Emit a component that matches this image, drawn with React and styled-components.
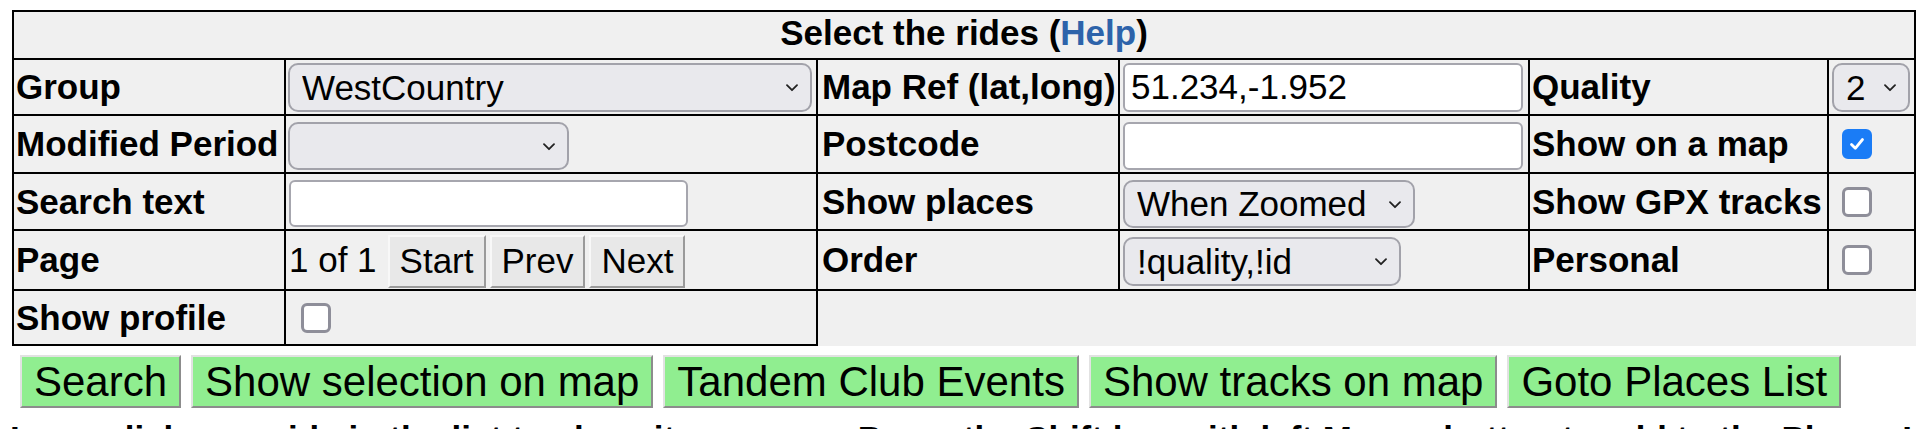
import React from "react";
import styled, { createGlobalStyle } from "styled-components";

const GlobalStyle = createGlobalStyle`
  html, body { margin: 0; padding: 0; background: #fff; }
  body { font-family: "Liberation Sans", Arial, Helvetica, sans-serif; color: #000; }
  * { box-sizing: border-box; }
`;

const Page = styled.div`
  width: 1920px;
  height: 429px;
  overflow: hidden;
  padding: 10px 0 0 12px;
`;

const Form = styled.div`
  display: grid;
  grid-template-columns: 274px 532px 302px 410px 299px 87px;
  grid-template-rows: 50px 56px 58px 57px 60px 55px;
  width: 1904px;
  background: #f0f0f0;
  font-size: 35px;
`;

const Cell = styled.div`
  display: flex;
  align-items: center;
  min-width: 0;
  white-space: nowrap;
  padding: 0 0 0 ${(p) => p.$pad ?? 2}px;
  border-right: 2px solid #000;
  border-bottom: 2px solid #000;
  ${(p) => (p.$first ? "border-left: 2px solid #000;" : "")}
`;

const TitleCell = styled(Cell)`
  grid-column: 1 / -1;
  border-top: 2px solid #000;
  border-left: 2px solid #000;
  justify-content: center;
  font-weight: bold;
  padding: 0 0 4px 0;
`;

const Label = styled(Cell)`
  font-weight: bold;
`;

const HelpLink = styled.a`
  color: #2d63aa;
  text-decoration: none;
`;

const SelectWrap = styled.div`
  position: relative;
  display: inline-flex;
  width: ${(p) => p.$w}px;
  height: ${(p) => p.$h ?? 49}px;
  margin-top: ${(p) => p.$mt ?? 0}px;
`;

const NativeSelect = styled.select`
  appearance: none;
  -webkit-appearance: none;
  width: 100%;
  height: 100%;
  margin: 0;
  padding: 0 40px 0 12px;
  font-family: inherit;
  font-size: 35px;
  font-weight: normal;
  color: #000;
  background: #e9e9ed;
  border: 2px solid #a2a2aa;
  border-radius: 10px;
  outline: none;
`;

const Chevron = styled.svg`
  position: absolute;
  right: 14px;
  top: 50%;
  width: 12px;
  height: 8px;
  margin-top: -3px;
  pointer-events: none;
`;

const TextInput = styled.input`
  width: ${(p) => p.$w}px;
  height: ${(p) => p.$h ?? 49}px;
  margin: ${(p) => p.$mt ?? 0}px 0 0 0;
  padding: 0 6px;
  font-family: inherit;
  font-size: 35px;
  color: #000;
  background: #fff;
  border: 2px solid #a6a6ae;
  border-radius: 6px;
  outline: none;
`;

const Check = styled.span`
  display: inline-flex;
  align-items: center;
  justify-content: center;
  width: 30px;
  height: 30px;
  margin-left: ${(p) => p.$ml ?? 12}px;
  border-radius: 6px;
  border: 3px solid ${(p) => (p.$on ? "#1a7cf6" : "#8e8e99")};
  background: ${(p) => (p.$on ? "#1a7cf6" : "#fff")};
`;

const PagerText = styled.span`
  margin-right: 11px;
`;

const PagerButtons = styled.div`
  display: flex;
  gap: 4px;
  margin-top: 2px;
`;

const PagerButton = styled.button`
  height: 53px;
  margin: 0;
  padding: 0 10px;
  font-family: inherit;
  font-size: 35px;
  color: #000;
  background: #e8e8e8;
  border: 2px solid;
  border-color: #f8f8f8 #9a9a9a #9a9a9a #f8f8f8;
`;

const EmptyFill = styled.div`
  grid-column: 3 / -1;
`;

const ActionBar = styled.div`
  display: flex;
  gap: 10px;
  margin: 9px 0 0 8px;
`;

const ActionButton = styled.button`
  height: 53px;
  margin: 0;
  padding: 0 12px;
  font-family: inherit;
  font-size: 42px;
  color: #000;
  background: #90ee90;
  border: 2px solid;
  border-color: #e2e2e2 #8c8c8c #8c8c8c #e2e2e2;
  white-space: nowrap;
`;

const Note = styled.p`
  margin: 11px 0 0 -2px;
  font-size: 35px;
  font-weight: bold;
  white-space: nowrap;
`;

function Select({ w, h, mt, value, options }) {
  return (
    <SelectWrap $w={w} $h={h} $mt={mt}>
      <NativeSelect defaultValue={value}>
        {options.map((o) => (
          <option key={o} value={o}>
            {o}
          </option>
        ))}
      </NativeSelect>
      <Chevron viewBox="0 0 12 8">
        <path d="M1 1.2 L6 6.2 L11 1.2" fill="none" stroke="#222" strokeWidth="1.8" strokeLinecap="round" strokeLinejoin="round" />
      </Chevron>
    </SelectWrap>
  );
}

function Checkbox({ on, ml }) {
  return (
    <Check role="checkbox" aria-checked={on ? "true" : "false"} $on={on} $ml={ml}>
      {on && (
        <svg width="20" height="20" viewBox="0 0 20 20">
          <path d="M4.5 10.5 L8.3 14.3 L15.5 5.5" fill="none" stroke="#fff" strokeWidth="2.8" strokeLinecap="round" strokeLinejoin="round" />
        </svg>
      )}
    </Check>
  );
}

export default function App() {
  return (
    <Page>
      <GlobalStyle />
      <Form>
        <TitleCell>
          Select the rides (<HelpLink href="#help">Help</HelpLink>)
        </TitleCell>

        <Label $first>Group</Label>
        <Cell>
          <Select w={524} value="WestCountry" options={["WestCountry", "London", "Midlands", "North"]} />
        </Cell>
        <Label $pad={4}>Map Ref (lat,long)</Label>
        <Cell $pad={3}>
          <TextInput $w={400} defaultValue="51.234,-1.952" />
        </Cell>
        <Label>Quality</Label>
        <Cell $pad={3}>
          <Select w={78} value="2" options={["1", "2", "3", "4", "5"]} />
        </Cell>

        <Label $first>Modified Period</Label>
        <Cell>
          <Select w={281} h={48} mt={4} value="" options={["", "Last week", "Last month", "Last year"]} />
        </Cell>
        <Label $pad={4}>Postcode</Label>
        <Cell $pad={3}>
          <TextInput $w={400} $h={48} $mt={4} defaultValue="" />
        </Cell>
        <Label>Show on a map</Label>
        <Cell>
          <Checkbox on ml={11} />
        </Cell>

        <Label $first>Search text</Label>
        <Cell $pad={3}>
          <TextInput $w={399} $h={47} $mt={4} defaultValue="" />
        </Cell>
        <Label $pad={4}>Show places</Label>
        <Cell $pad={3}>
          <Select w={292} h={48} mt={4} value="When Zoomed" options={["Never", "When Zoomed", "Always"]} />
        </Cell>
        <Label>Show GPX tracks</Label>
        <Cell>
          <Checkbox ml={11} />
        </Cell>

        <Label $first>Page</Label>
        <Cell $pad={3}>
          <PagerText>1 of 1</PagerText>
          <PagerButtons>
            <PagerButton>Start</PagerButton>
            <PagerButton>Prev</PagerButton>
            <PagerButton>Next</PagerButton>
          </PagerButtons>
        </Cell>
        <Label $pad={4}>Order</Label>
        <Cell $pad={3}>
          <Select w={278} h={49} mt={2} value="!quality,!id" options={["!quality,!id", "id", "!id", "quality"]} />
        </Cell>
        <Label>Personal</Label>
        <Cell>
          <Checkbox ml={11} />
        </Cell>

        <Label $first>Show profile</Label>
        <Cell>
          <Checkbox ml={13} />
        </Cell>
        <EmptyFill />
      </Form>

      <ActionBar>
        <ActionButton>Search</ActionButton>
        <ActionButton>Show selection on map</ActionButton>
        <ActionButton>Tandem Club Events</ActionButton>
        <ActionButton>Show tracks on map</ActionButton>
        <ActionButton>Goto Places List</ActionButton>
      </ActionBar>

      <Note>
        Long click on a ride in the list to show it on a map. Press the Shift key with left Mouse button to add to the Places List
      </Note>
    </Page>
  );
}
